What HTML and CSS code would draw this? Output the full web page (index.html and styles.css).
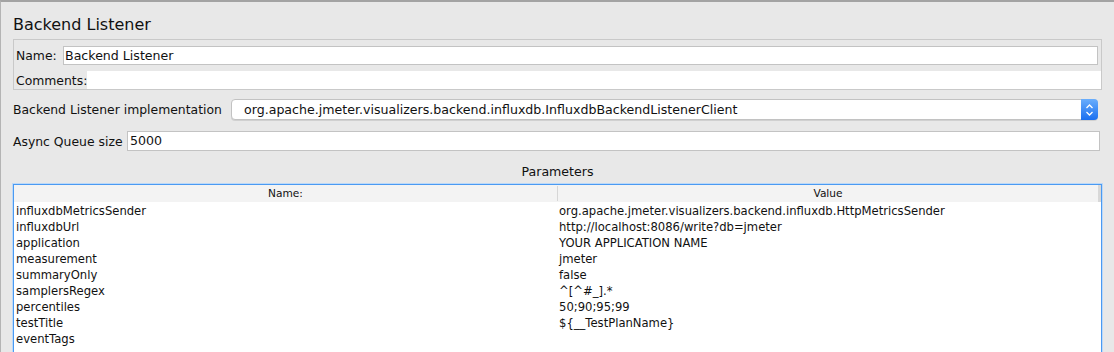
FILE: index.html
```html
<!DOCTYPE html>
<html lang="en">
<head>
    <meta charset="UTF-8">
    <title>Backend Listener</title>
    <link rel="stylesheet" href="styles.css">
</head>
<body>
    <div class="window">
        <h1 class="title">Backend Listener</h1>

        <div class="name-panel">
            <div class="name-row">
                <label>Name:</label>
                <div class="field name-field">Backend Listener</div>
            </div>
            <div class="comments-row">
                <label>Comments:</label>
                <div class="comments-field"></div>
            </div>
        </div>

        <div class="form-row impl-row">
            <label>Backend Listener implementation</label>
            <div class="select">
                <span class="select-text">org.apache.jmeter.visualizers.backend.influxdb.InfluxdbBackendListenerClient</span>
                <span class="stepper">
                    <svg width="9" height="14" viewBox="0 0 9 14">
                        <path d="M1.5 5 L4.5 2 L7.5 5" fill="none" stroke="#fff" stroke-width="1.3"/>
                        <path d="M1.5 9 L4.5 12 L7.5 9" fill="none" stroke="#fff" stroke-width="1.3"/>
                    </svg>
                </span>
            </div>
        </div>

        <div class="form-row queue-row">
            <label>Async Queue size</label>
            <div class="field queue-field">5000</div>
        </div>

        <div class="params-title">Parameters</div>

        <div class="params-table">
            <div class="table-head">
                <div class="col-name">Name:</div>
                <div class="col-value">Value</div>
                <div class="head-stub"></div>
            </div>
            <div class="table-row"><div class="cell">influxdbMetricsSender</div><div class="cell">org.apache.jmeter.visualizers.backend.influxdb.HttpMetricsSender</div></div>
            <div class="table-row"><div class="cell">influxdbUrl</div><div class="cell">http://localhost:8086/write?db=jmeter</div></div>
            <div class="table-row"><div class="cell">application</div><div class="cell">YOUR APPLICATION NAME</div></div>
            <div class="table-row"><div class="cell">measurement</div><div class="cell">jmeter</div></div>
            <div class="table-row"><div class="cell">summaryOnly</div><div class="cell">false</div></div>
            <div class="table-row"><div class="cell">samplersRegex</div><div class="cell">^[^#_].*</div></div>
            <div class="table-row"><div class="cell">percentiles</div><div class="cell">50;90;95;99</div></div>
            <div class="table-row"><div class="cell">testTitle</div><div class="cell">${__TestPlanName}</div></div>
            <div class="table-row"><div class="cell">eventTags</div><div class="cell"></div></div>
        </div>
    </div>
</body>
</html>
```

FILE: styles.css
```css
html, body {
    margin: 0;
    padding: 0;
}
body {
    font-family: "DejaVu Sans", "Noto Sans", sans-serif;
    color: #111;
    background: #e8e8e8;
    overflow: hidden;
}
.window {
    box-sizing: border-box;
    width: 1114px;
    height: 352px;
    border-top: 2px solid #a3a3a3;
    border-left: 1px solid #b4b4b4;
    padding: 0 12px 0 12px;
    overflow: hidden;
}
.title {
    margin: 12px 0 0 0;
    font-size: 16px;
    font-weight: normal;
    line-height: 22px;
    height: 23px;
}
.name-panel {
    border: 1px solid #c9c9c9;
    margin-top: 2px;
}
.name-row {
    display: flex;
    align-items: center;
    padding: 6px 3px 5px 2px;
}
label {
    font-size: 12.4px;
    white-space: nowrap;
}
.name-row label {
    width: 47px;
}
.field {
    box-sizing: border-box;
    background: #fff;
    border: 1px solid #c3c3c3;
    font-size: 12.6px;
    line-height: 17px;
    height: 19px;
    padding-left: 1px;
}
.name-field {
    flex: 1;
}
.comments-row {
    display: flex;
    align-items: center;
    height: 18px;
    margin-top: 1px;
    padding-left: 2px;
}
.comments-field {
    flex: 1;
    align-self: stretch;
    background: #fff;
}
.form-row {
    display: flex;
    align-items: center;
}
.impl-row {
    margin-top: 9px;
    height: 21px;
}
.impl-row label {
    width: 218px;
}
.select {
    flex: 1;
    display: flex;
    align-items: center;
    box-sizing: border-box;
    height: 21px;
    margin-right: 4px;
    background: #fff;
    border: 1px solid #c2c2c2;
    border-radius: 4px;
    box-shadow: 0 1px 0 #d0d0d0;
}
.select-text {
    flex: 1;
    font-size: 12.6px;
    padding-left: 12px;
    white-space: nowrap;
}
.stepper {
    display: flex;
    align-items: center;
    justify-content: center;
    width: 17px;
    height: 21px;
    margin: -1px -1px -1px 0;
    border-radius: 0 4px 4px 0;
    background: linear-gradient(#6aaefc, #1a6ff0);
}
.queue-row {
    margin-top: 11px;
    height: 20px;
}
.queue-row label {
    width: 114px;
}
.queue-field {
    flex: 1;
    height: 20px;
    margin-right: 2px;
    padding-left: 2px;
    line-height: 18px;
}
.params-title {
    margin-top: 12px;
    text-align: center;
    font-size: 12.6px;
    line-height: 17px;
    height: 17px;
}
.params-table {
    margin-top: 4px;
    border: 1px solid #4a9af2;
    box-shadow: 0 0 0 1px #bcd9f8;
    background: #fff;
    height: 200px;
}
.table-head {
    display: flex;
    height: 17px;
    margin-bottom: 1px;
    background: #f3f3f3;
    font-size: 10.6px;
    line-height: 17px;
}
.col-name {
    width: 543px;
    text-align: center;
    border-right: 1px solid #d6d6d6;
    margin: 1px 0;
    line-height: 15px;
}
.col-value {
    flex: 1;
    text-align: center;
}
.head-stub {
    width: 3px;
    background: #d8d8d8;
}
.table-row {
    display: flex;
    height: 16px;
    font-size: 11.6px;
    line-height: 16px;
}
.cell {
    white-space: nowrap;
    padding-left: 1px;
}
.cell:first-child {
    width: 544px;
    padding-left: 2px;
    box-sizing: border-box;
}
```
